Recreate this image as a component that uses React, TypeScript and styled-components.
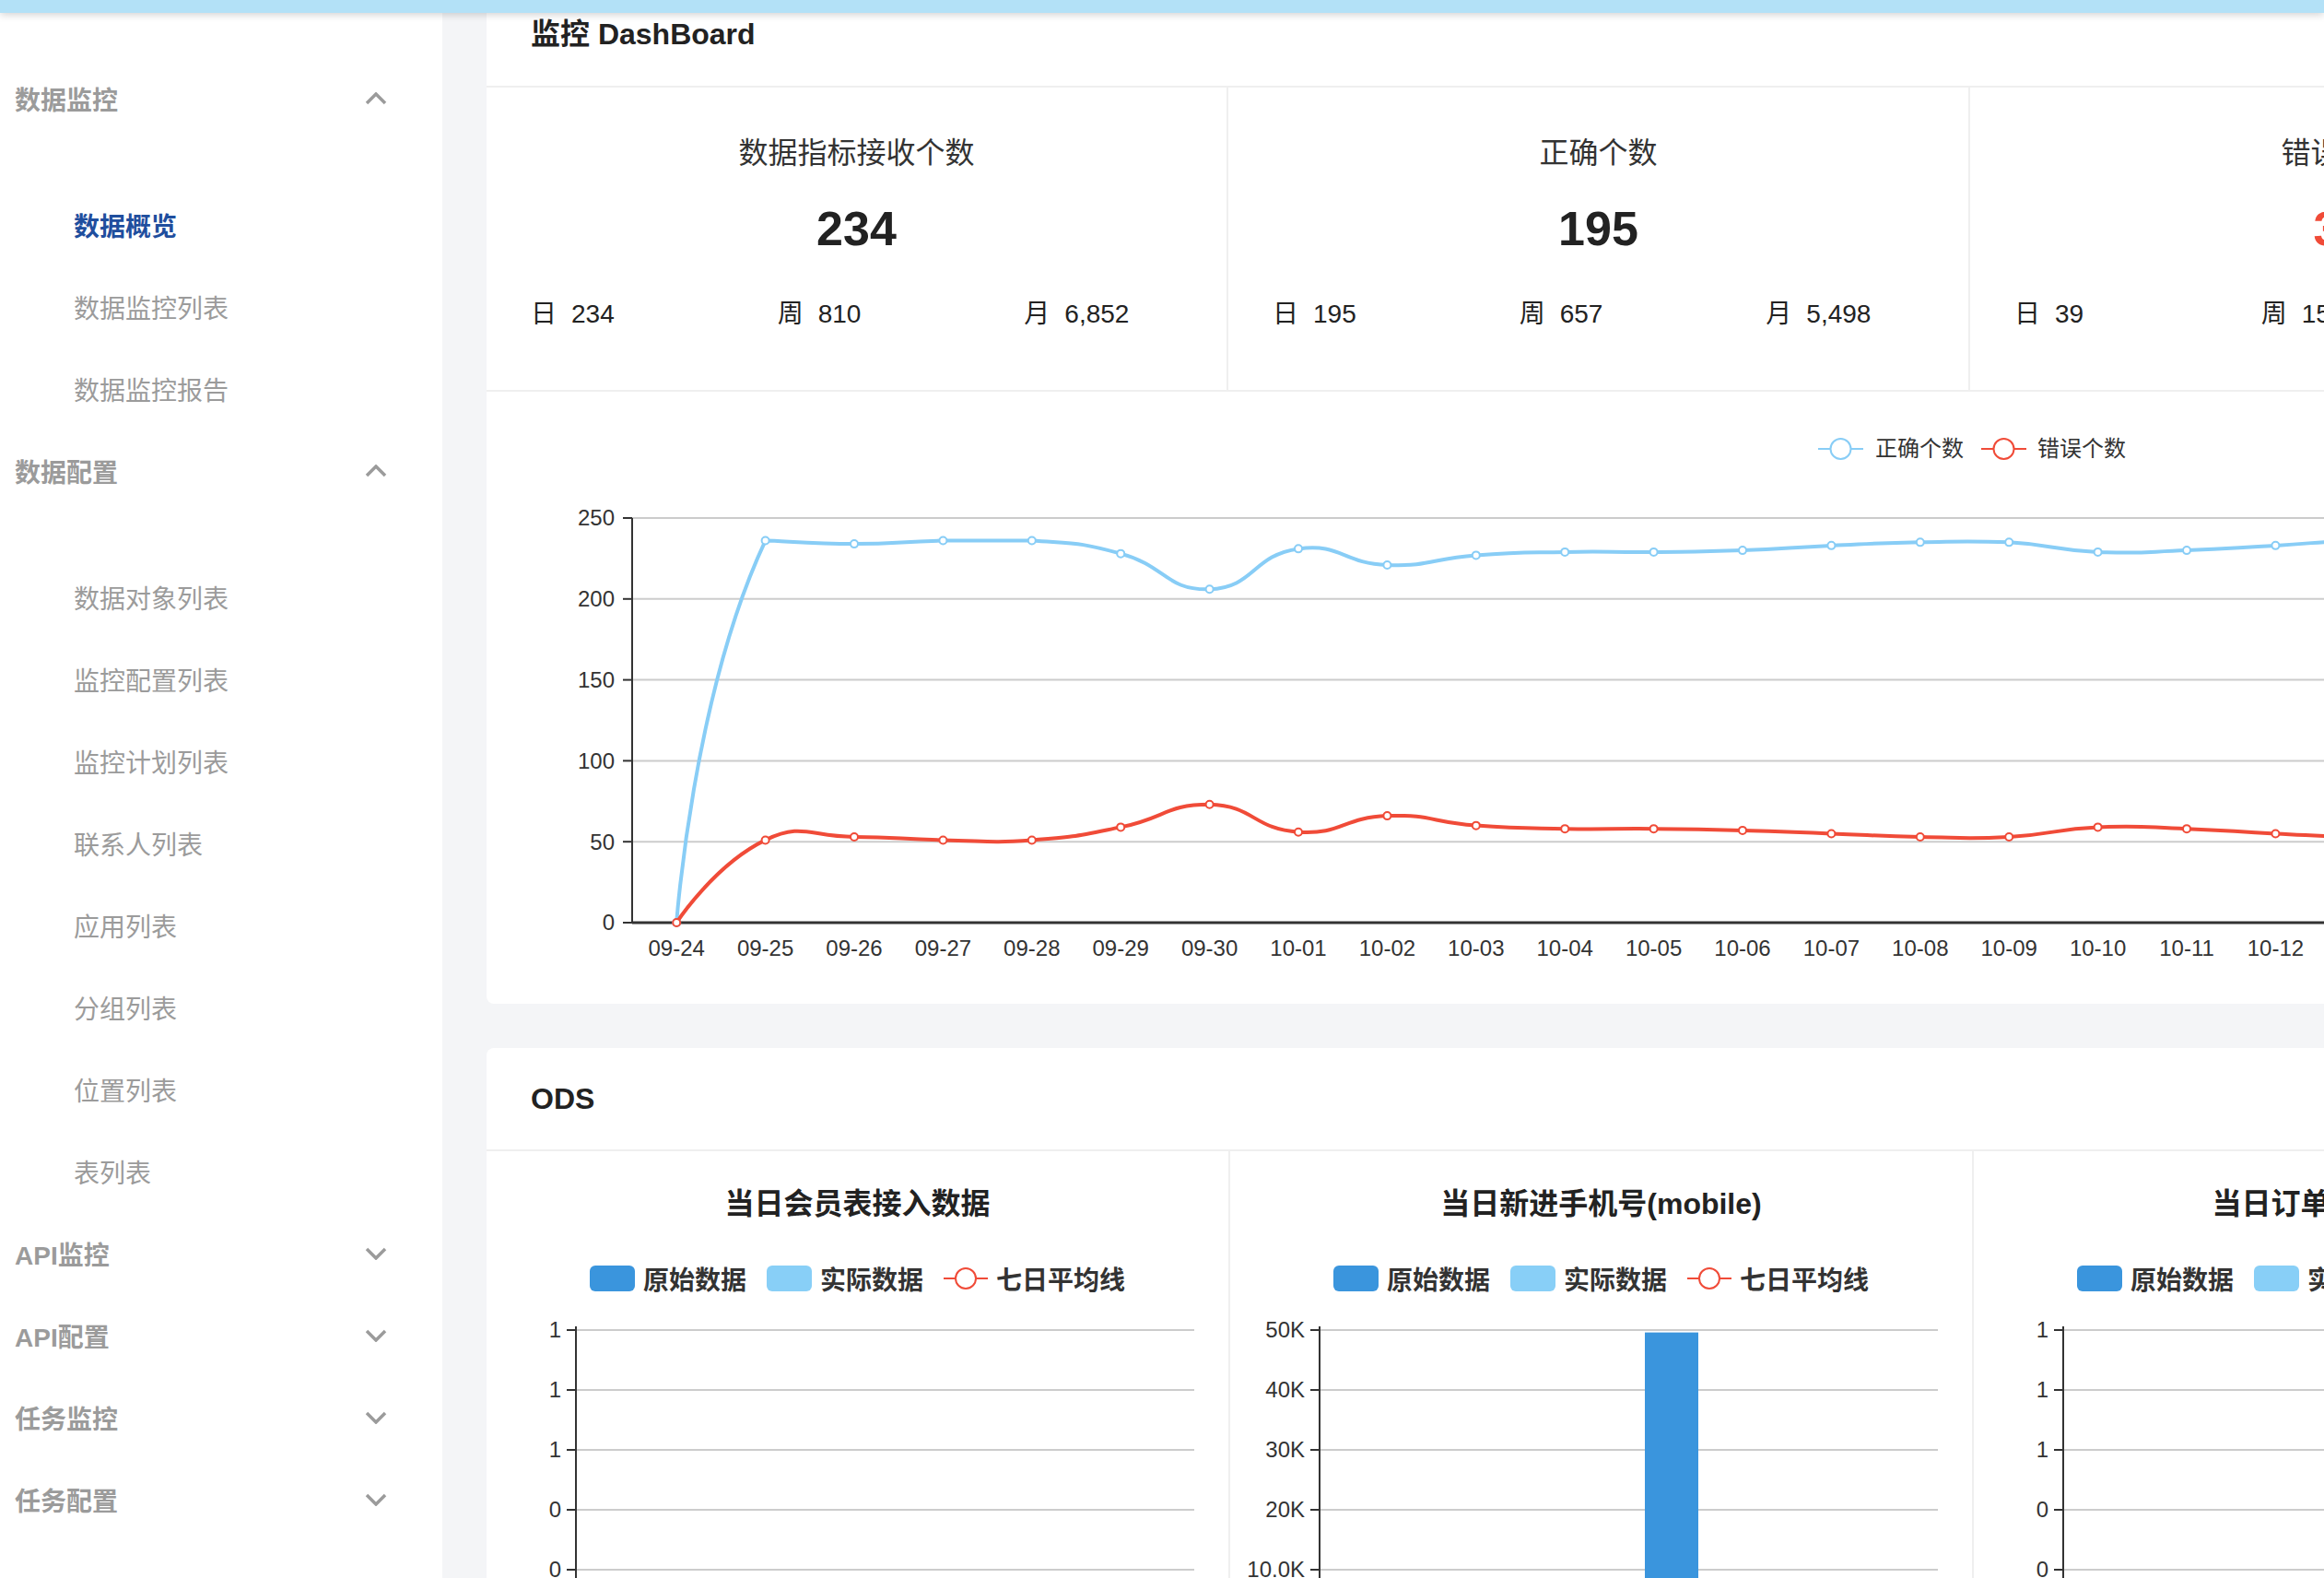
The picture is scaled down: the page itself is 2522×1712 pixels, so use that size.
import React from "react";
import styled, { createGlobalStyle } from "styled-components";

const GlobalStyle = createGlobalStyle`
  html, body {
    margin: 0;
    padding: 0;
    height: 100%;
    overflow: hidden;
  }
  body {
    font-family: "Liberation Sans", "Noto Sans CJK SC", sans-serif;
    color: #333;
    background: #f4f5f7;
  }
  * {
    box-sizing: border-box;
  }
`;

const BLUE = "#88cdf6";
const RED = "#f04b38";
const BAR_DARK = "#3a95dd";
const BAR_LIGHT = "#88cff7";

const TopBar = styled.div`
  position: fixed;
  top: 0;
  left: 0;
  right: 0;
  height: 14px;
  background: #b3e1f7;
  box-shadow: 0 2px 8px rgba(0, 0, 0, 0.18);
  z-index: 10;
`;

const Layout = styled.div`
  display: flex;
  height: 1712px;
  overflow: hidden;
`;

const Sidebar = styled.nav`
  width: 480px;
  flex-shrink: 0;
  background: #fff;
  padding-top: 62px;
  font-family: "Liberation Sans", "Noto Sans CJK SC", sans-serif;
`;

const GroupHeader = styled.div`
  height: 89px;
  display: flex;
  align-items: center;
  justify-content: space-between;
  padding: 0 60px 0 16px;
  font-size: 28px;
  font-weight: 700;
  color: #9b9b9b;
`;

const SubList = styled.div`
  padding-top: 48px;
`;

const SubItem = styled.div<{ $active?: boolean }>`
  height: 89px;
  display: flex;
  align-items: center;
  padding-left: 80px;
  font-size: 28px;
  font-weight: ${(p) => (p.$active ? 700 : 400)};
  color: ${(p) => (p.$active ? "#1f4e9e" : "#9b9b9b")};
`;

const Main = styled.main`
  flex: 1;
  min-width: 0;
  overflow: hidden;
  padding-left: 48px;
  background: #f4f5f7;
`;

const Card = styled.section<{ $scrolled?: boolean }>`
  width: 3220px;
  background: #fff;
  border-radius: 8px;
  margin-top: ${(p) => (p.$scrolled ? "-17px" : "0")};
  margin-bottom: 48px;
  overflow: hidden;
`;

const CardHeader = styled.div<{ $offset?: number }>`
  height: 112px;
  display: flex;
  align-items: center;
  padding-left: 48px;
  padding-bottom: ${(p) => p.$offset ?? 0}px;
  font-size: 32px;
  font-weight: 700;
  color: #222;
  border-bottom: 2px solid #efefef;
`;

const StatRow = styled.div`
  display: grid;
  grid-template-columns: repeat(4, 1fr);
  border-bottom: 2px solid #efefef;
`;

const StatCell = styled.div`
  border-right: 2px solid #efefef;
  text-align: center;
  padding-top: 49px;
  padding-bottom: 62px;
`;

const StatTitle = styled.div`
  font-size: 32px;
  line-height: 44px;
  color: #333;
`;

const StatValue = styled.div<{ $danger?: boolean }>`
  margin-top: 28px;
  font-size: 52px;
  line-height: 64px;
  font-weight: 700;
  color: ${(p) => (p.$danger ? RED : "#222")};
`;

const SubRow = styled.div`
  margin-top: 41px;
  display: grid;
  grid-template-columns: repeat(3, 1fr);
  text-align: left;
`;

const SubStat = styled.div`
  padding-left: 48px;
  font-size: 28px;
  line-height: 40px;
  color: #222;
  white-space: nowrap;
`;

const SubLabel = styled.span`
  margin-right: 16px;
`;

const ChartSvg = styled.svg`
  display: block;
  font-family: "Liberation Sans", "Noto Sans CJK SC", sans-serif;
`;

const ChartRow = styled.div`
  display: grid;
  grid-template-columns: repeat(4, 1fr);
`;

const ChartCell = styled.div`
  border-right: 2px solid #efefef;
  padding-top: 35px;
  height: 760px;
`;

const ChartTitle = styled.div`
  font-size: 32px;
  line-height: 44px;
  font-weight: 700;
  color: #222;
  text-align: center;
`;

const Legend = styled.div`
  margin-top: 39px;
  height: 40px;
  display: flex;
  justify-content: center;
  align-items: center;
  gap: 22px;
`;

const LegendItem = styled.div`
  display: flex;
  align-items: center;
  gap: 9px;
  font-size: 28px;
  font-weight: 700;
  color: #333;
`;

const Swatch = styled.span<{ $color: string }>`
  width: 49px;
  height: 28px;
  border-radius: 6px;
  background: ${(p) => p.$color};
`;

const Chevron = ({ up }: { up: boolean }) => (
  <svg width="24" height="14" viewBox="0 0 24 14">
    <polyline
      points={up ? "2,12 12,2 22,12" : "2,2 12,12 22,2"}
      fill="none"
      stroke="#9b9b9b"
      strokeWidth="3.5"
    />
  </svg>
);

const menu = [
  { title: "数据监控", open: true, items: ["数据概览", "数据监控列表", "数据监控报告"] },
  {
    title: "数据配置",
    open: true,
    items: ["数据对象列表", "监控配置列表", "监控计划列表", "联系人列表", "应用列表", "分组列表", "位置列表", "表列表"],
  },
  { title: "API监控", open: false, items: [] },
  { title: "API配置", open: false, items: [] },
  { title: "任务监控", open: false, items: [] },
  { title: "任务配置", open: false, items: [] },
];

const stats = [
  { title: "数据指标接收个数", value: "234", day: "234", week: "810", month: "6,852" },
  { title: "正确个数", value: "195", day: "195", week: "657", month: "5,498" },
  { title: "错误个数", value: "39", day: "39", week: "153", month: "1,354", danger: true },
  { title: "错误率", value: "16.67%", day: "16.67%", week: "18.89%", month: "19.76%", danger: true },
];

// line chart data
const dates: string[] = [];
for (let i = 24; i <= 30; i++) dates.push(`09-${i}`);
for (let i = 1; i <= 24; i++) dates.push(`10-${String(i).padStart(2, "0")}`);

const correct = [0, 236, 234, 236, 236, 228, 206, 231, 221, 227, 229, 229, 230, 233, 235, 235, 229, 230, 233, 236, 234, 232, 235, 236, 233, 230, 231, 234, 236, 235, 233];
const wrong = [0, 51, 53, 51, 51, 59, 73, 56, 66, 60, 58, 58, 57, 55, 53, 53, 59, 58, 55, 53, 54, 56, 52, 55, 57, 54, 53, 55, 56, 54, 52];

type Pt = [number, number];

// bezier smoothing like echarts (smooth: true -> 0.5), control points kept inside the points' bbox
function smoothPath(pts: Pt[], smooth = 0.5) {
  const xs = pts.map((p) => p[0]);
  const ys = pts.map((p) => p[1]);
  const minX = Math.min(...xs), maxX = Math.max(...xs);
  const minY = Math.min(...ys), maxY = Math.max(...ys);
  const clamp = (p: Pt): Pt => [
    Math.min(maxX, Math.max(minX, p[0])),
    Math.min(maxY, Math.max(minY, p[1])),
  ];
  let d = `M${pts[0][0]},${pts[0][1]}`;
  let cp0: Pt = pts[0];
  for (let i = 1; i < pts.length; i++) {
    const [x, y] = pts[i];
    const prev = pts[i - 1];
    const next = pts[i + 1];
    let cp1: Pt = [x, y];
    let nextCp0: Pt = [x, y];
    if (next) {
      const vx = next[0] - prev[0];
      const vy = next[1] - prev[1];
      const lenPrev = Math.hypot(x - prev[0], y - prev[1]);
      const lenNext = Math.hypot(next[0] - x, next[1] - y);
      const ratio = lenNext / (lenNext + lenPrev);
      cp1 = clamp([x - vx * smooth * (1 - ratio), y - vy * smooth * (1 - ratio)]);
      nextCp0 = clamp([x + vx * smooth * ratio, y + vy * smooth * ratio]);
    }
    d += ` C${cp0[0].toFixed(1)},${cp0[1].toFixed(1)} ${cp1[0].toFixed(1)},${cp1[1].toFixed(1)} ${x.toFixed(1)},${y.toFixed(1)}`;
    cp0 = nextCp0;
  }
  return d;
}

const LC = { x0: 158, band: 96.4, base: 576, top: 137 };
const lx = (i: number) => LC.x0 + LC.band / 2 + i * LC.band;
const ly = (v: number) => LC.base - (v * (LC.base - LC.top)) / 250;
const gridRight = LC.x0 + LC.band * dates.length;

function LineChart() {
  const series = [
    { color: BLUE, data: correct },
    { color: RED, data: wrong },
  ];
  return (
    <ChartSvg width={3220} height={664} viewBox="0 0 3220 664">
      {/* legend */}
      <g>
        <line x1={1445} x2={1494} y1={62} y2={62} stroke={BLUE} strokeWidth={2} />
        <circle cx={1469.5} cy={62} r={11} fill="#fff" stroke={BLUE} strokeWidth={2} />
        <text x={1507} y={62} dy="0.35em" fontSize={24} fill="#333">正确个数</text>
        <line x1={1622} x2={1671} y1={62} y2={62} stroke={RED} strokeWidth={2} />
        <circle cx={1646.5} cy={62} r={11} fill="#fff" stroke={RED} strokeWidth={2} />
        <text x={1683} y={62} dy="0.35em" fontSize={24} fill="#333">错误个数</text>
      </g>
      {[0, 50, 100, 150, 200, 250].map((v) => (
        <g key={v}>
          {v > 0 && (
            <line x1={LC.x0} x2={gridRight} y1={ly(v)} y2={ly(v)} stroke="#ccc" strokeWidth={2} />
          )}
          <line x1={LC.x0 - 10} x2={LC.x0} y1={ly(v)} y2={ly(v)} stroke="#333" strokeWidth={2} />
          <text x={139} y={ly(v)} dy="0.35em" fontSize={24} fill="#333" textAnchor="end">
            {v}
          </text>
        </g>
      ))}
      <line x1={LC.x0} x2={LC.x0} y1={LC.top} y2={LC.base} stroke="#333" strokeWidth={2} />
      <line x1={LC.x0} x2={gridRight} y1={LC.base} y2={LC.base} stroke="#333" strokeWidth={3} />
      {dates.map((d, i) => (
        <text key={d} x={lx(i)} y={604} dy="0.35em" fontSize={24} fill="#333" textAnchor="middle">
          {d}
        </text>
      ))}
      {series.map((s) => {
        const pts: Pt[] = s.data.map((v, i) => [lx(i), ly(v)]);
        return (
          <g key={s.color}>
            <path d={smoothPath(pts)} fill="none" stroke={s.color} strokeWidth={4} />
            {pts.map((p, i) => (
              <circle key={i} cx={p[0]} cy={p[1]} r={4} fill="#fff" stroke={s.color} strokeWidth={2} />
            ))}
          </g>
        );
      })}
    </ChartSvg>
  );
}

const odsCharts = [
  { title: "当日会员表接入数据", labels: ["1", "1", "1", "0", "0", "0"], bar: 0 },
  { title: "当日新进手机号(mobile)", labels: ["50K", "40K", "30K", "20K", "10.0K", "0"], bar: 49600 },
  { title: "当日订单表接入数据", labels: ["1", "1", "1", "0", "0", "0"], bar: 0 },
  { title: "当日商品表接入数据", labels: ["1", "1", "1", "0", "0", "0"], bar: 0 },
];

const BC = { axis: 97, right: 768, top: 36, step: 65 };

function BarChart({ labels, bar }: { labels: string[]; bar: number }) {
  const bottom = BC.top + BC.step * 5;
  const barTop = bottom - (bar / 50000) * (bottom - BC.top);
  return (
    <ChartSvg width={805} height={400} viewBox="0 0 805 400">
      {labels.map((l, i) => {
        const y = BC.top + i * BC.step;
        return (
          <g key={i}>
            <line x1={BC.axis} x2={BC.right} y1={y} y2={y} stroke="#ccc" strokeWidth={2} />
            <line x1={BC.axis - 10} x2={BC.axis} y1={y} y2={y} stroke="#333" strokeWidth={2} />
            <text x={BC.axis - 16} y={y} dy="0.35em" fontSize={24} fill="#333" textAnchor="end">
              {l}
            </text>
          </g>
        );
      })}
      {bar > 0 && <rect x={450} y={barTop} width={58} height={bottom - barTop} fill={BAR_DARK} />}
      <line x1={BC.axis} x2={BC.axis} y1={BC.top - 4} y2={bottom} stroke="#333" strokeWidth={2} />
      <line x1={BC.axis} x2={BC.right} y1={bottom} y2={bottom} stroke="#333" strokeWidth={2} />
    </ChartSvg>
  );
}

export default function App() {
  return (
    <>
      <GlobalStyle />
      <TopBar />
      <Layout>
        <Sidebar>
          {menu.map((g) => (
            <div key={g.title}>
              <GroupHeader>
                <span>{g.title}</span>
                <Chevron up={g.open} />
              </GroupHeader>
              {g.open && (
                <SubList>
                  {g.items.map((it) => (
                    <SubItem key={it} $active={it === "数据概览"}>
                      {it}
                    </SubItem>
                  ))}
                </SubList>
              )}
            </div>
          ))}
        </Sidebar>
        <Main>
          <Card $scrolled>
            <CardHeader $offset={8}>监控 DashBoard</CardHeader>
            <StatRow>
              {stats.map((s) => (
                <StatCell key={s.title}>
                  <StatTitle>{s.title}</StatTitle>
                  <StatValue $danger={s.danger}>{s.value}</StatValue>
                  <SubRow>
                    <SubStat>
                      <SubLabel>日</SubLabel>
                      {s.day}
                    </SubStat>
                    <SubStat>
                      <SubLabel>周</SubLabel>
                      {s.week}
                    </SubStat>
                    <SubStat>
                      <SubLabel>月</SubLabel>
                      {s.month}
                    </SubStat>
                  </SubRow>
                </StatCell>
              ))}
            </StatRow>
            <LineChart />
          </Card>
          <Card>
            <CardHeader>ODS</CardHeader>
            <ChartRow>
              {odsCharts.map((c) => (
                <ChartCell key={c.title}>
                  <ChartTitle>{c.title}</ChartTitle>
                  <Legend>
                    <LegendItem>
                      <Swatch $color={BAR_DARK} />
                      原始数据
                    </LegendItem>
                    <LegendItem>
                      <Swatch $color={BAR_LIGHT} />
                      实际数据
                    </LegendItem>
                    <LegendItem>
                      <svg width="48" height="28" viewBox="0 0 48 28">
                        <line x1="0" x2="48" y1="14" y2="14" stroke={RED} strokeWidth="2" />
                        <circle cx="24" cy="14" r="11" fill="#fff" stroke={RED} strokeWidth="2" />
                      </svg>
                      七日平均线
                    </LegendItem>
                  </Legend>
                  <BarChart labels={c.labels} bar={c.bar} />
                </ChartCell>
              ))}
            </ChartRow>
          </Card>
        </Main>
      </Layout>
    </>
  );
}
